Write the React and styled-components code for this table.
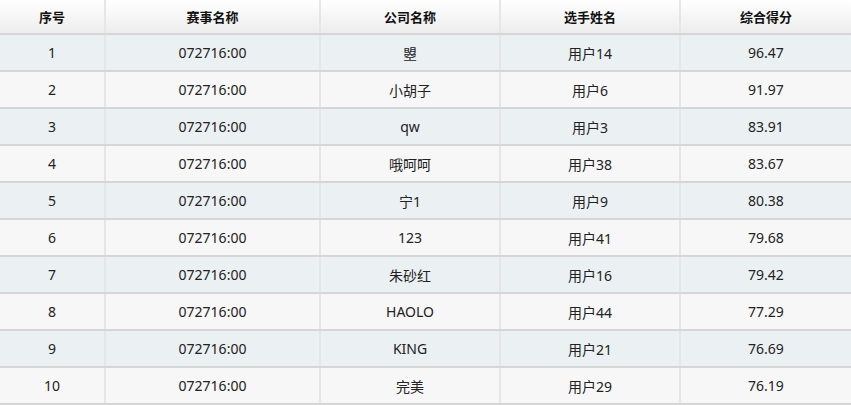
import { Fragment } from 'react';
import styled, { createGlobalStyle } from 'styled-components';

const GlobalStyle = createGlobalStyle`
   html, body {
      margin: 0;
      padding: 0;
      background: #ffffff;
   }
   body {
      font-family: 'Noto Sans', 'Noto Sans CJK SC', sans-serif;
   }
`;

const Table = styled.table`
   border-collapse: collapse;
   table-layout: fixed;
   width: 851px;
   color: #222222;
   font-size: 14px;
   & th,
   & td {
      border-right: 2px solid #e6e6e6;
      border-bottom: 2px solid #d6d6d6;
      padding: 0;
      text-align: center;
   }
   & th:last-child,
   & td:last-child {
      border-right: none;
   }
`;

const HeadCell = styled.th`
   height: 33px;
   background: linear-gradient(#ffffff, #ededed);
   color: #111111;
   font-size: 13px;
   font-weight: 700;
`;

const Row = styled.tr`
   background: ${({ $odd }) => ($odd ? '#ebf0f3' : '#f7f7f7')};
   & td {
      height: 35px;
   }
`;

const columns = [
   { title: '序号', width: 105 },
   { title: '赛事名称', width: 215 },
   { title: '公司名称', width: 180 },
   { title: '选手姓名', width: 180 },
   { title: '综合得分', width: 171 },
];

const rows = [
   ['072716:00', '曌', '用户14', '96.47'],
   ['072716:00', '小胡子', '用户6', '91.97'],
   ['072716:00', 'qw', '用户3', '83.91'],
   ['072716:00', '哦呵呵', '用户38', '83.67'],
   ['072716:00', '宁1', '用户9', '80.38'],
   ['072716:00', '123', '用户41', '79.68'],
   ['072716:00', '朱砂红', '用户16', '79.42'],
   ['072716:00', 'HAOLO', '用户44', '77.29'],
   ['072716:00', 'KING', '用户21', '76.69'],
   ['072716:00', '完美', '用户29', '76.19'],
];

const App = () => {
   return (
      <Fragment>
         <GlobalStyle />
         <Table>
            <colgroup>
               {columns.map((c) => (
                  <col key={c.title} style={{ width: c.width }} />
               ))}
            </colgroup>
            <thead>
               <tr>
                  {columns.map((c) => (
                     <HeadCell key={c.title}>{c.title}</HeadCell>
                  ))}
               </tr>
            </thead>
            <tbody>
               {rows.map((r, i) => (
                  <Row key={i} $odd={i % 2 === 0}>
                     <td>{i + 1}</td>
                     {r.map((v, j) => (
                        <td key={j}>{v}</td>
                     ))}
                  </Row>
               ))}
            </tbody>
         </Table>
      </Fragment>
   );
};
export default App;
